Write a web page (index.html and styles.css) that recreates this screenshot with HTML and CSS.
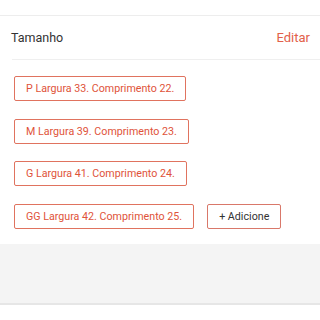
FILE: index.html
```html
<!DOCTYPE html>
<html>
<head>
<meta charset="utf-8">
<link rel="stylesheet" href="styles.css">
</head>
<body>
<div class="top"></div>
<div class="section">
  <div class="header">
    <span class="title">Tamanho</span>
    <span class="edit">Editar</span>
  </div>
  <div class="list">
    <div class="row"><span class="tag">P Largura 33. Comprimento 22.</span></div>
    <div class="row"><span class="tag">M Largura 39. Comprimento 23.</span></div>
    <div class="row"><span class="tag">G Largura 41. Comprimento 24.</span></div>
    <div class="row"><span class="tag">GG Largura 42. Comprimento 25.</span><span class="tag add">+ Adicione</span></div>
  </div>
</div>
<div class="grey"></div>
</body>
</html>
```
FILE: styles.css
```css
html, body { margin: 0; padding: 0; background: #fff; }
body { font-family: Roboto, "Noto Sans", sans-serif; width: 320px; }
.top { height: 15px; border-bottom: 1px solid #ededed; }
.section { padding-left: 12px; }
.header {
  display: flex; justify-content: space-between; align-items: center;
  height: 43px; padding-right: 10px;
  border-bottom: 1px solid #efefef;
  font-size: 12.5px;
}
.title { color: #333; margin-left: -1px; }
.edit { color: #e2604a; font-size: 13px; }
.list { padding: 16px 0 15px 2px; display: flex; flex-direction: column; gap: 17.7px; }
.row { display: flex; gap: 13px; }
.tag {
  display: inline-flex; align-items: center; height: 23px;
  padding: 0 11px; border: 1px solid #e0735f; border-radius: 2px;
  color: #e0533a; font-size: 10.7px; box-sizing: content-box;
}
.add { color: #333; border-color: #d9786a; padding: 0 11px; }
.grey { height: 59px; background: #f4f4f4; border-bottom: 2px solid #e6e6e6; }
```
